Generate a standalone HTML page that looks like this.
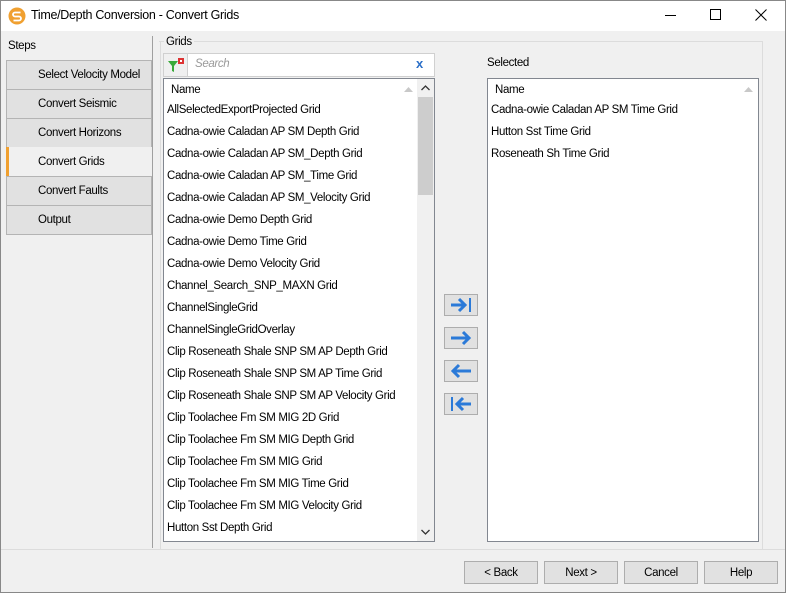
<!DOCTYPE html>
<html><head><style>
*{box-sizing:border-box;margin:0;padding:0}
body{width:786px;height:593px;overflow:hidden;background:#f0f0f0;font-family:"Liberation Sans",sans-serif;font-size:11.5px;color:#000;position:relative;letter-spacing:-0.35px}
.a{position:absolute}
.win{left:0;top:0;width:786px;height:593px;border:1px solid #888}
.title{left:1px;top:1px;width:784px;height:30px;background:#fff}
.step{left:6px;width:146px;height:30px;border:1px solid #b4b4b4;background:#e1e1e1;padding:8px 0 0 31px}
.list{background:#fff;border:1px solid #828790}
.row{position:absolute;left:3px;white-space:nowrap;margin-top:2px}
.btn{height:23px;width:74px;border:1px solid #adadad;background:#e1e1e1;text-align:center;line-height:23px}
.ab{left:444px;width:34px;height:22px;border:1px solid #adadad;background:#e1e1e1}
</style></head><body>
<div class="a win"></div>
<div class="a title"></div>
<svg class="a" style="left:8px;top:7px" width="18" height="18" viewBox="0 0 18 18"><circle cx="9" cy="9" r="8.5" fill="#f0a030"/><path d="M12.5 5.5H7a2 2 0 0 0 0 4h4a2 2 0 0 1 0 4H5.5" stroke="#fff" stroke-width="1.8" fill="none"/></svg>
<div class="a" style="left:31px;top:8px;font-size:12.5px;letter-spacing:-0.3px">Time/Depth Conversion - Convert Grids</div>
<div class="a" style="left:665px;top:15px;width:11px;height:1px;background:#000"></div>
<div class="a" style="left:710px;top:9px;width:11px;height:11px;border:1px solid #000"></div>
<svg class="a" style="left:755px;top:9px" width="12" height="12"><path d="M0.5 0.5L11.5 11.5M11.5 0.5L0.5 11.5" stroke="#000"/></svg>

<div class="a" style="left:8px;top:40px">Steps</div>
<div class="a step" style="top:60px">Select Velocity Model</div>
<div class="a step" style="top:89px">Convert Seismic</div>
<div class="a step" style="top:118px">Convert Horizons</div>
<div class="a step" style="top:147px;background:#f0f0f0;border:none;border-left:3px solid #f0a030;padding-left:29px;padding-top:9px">Convert Grids</div>
<div class="a step" style="top:176px">Convert Faults</div>
<div class="a step" style="top:205px">Output</div>
<div class="a" style="left:152px;top:36px;width:1px;height:512px;background:#a0a0a0"></div>

<div class="a" style="left:159px;top:41px;width:604px;height:508px;border:1px solid #dcdcdc;border-bottom:none;border-left:none"></div>
<div class="a" style="left:160px;top:41px;width:1px;height:508px;background:#dcdcdc"></div>
<div class="a" style="left:164px;top:36px;background:#f0f0f0;padding:0 2px">Grids</div>

<div class="a" style="left:163px;top:53px;width:272px;height:24px;background:#fff;border:1px solid #d0d0d0"></div>
<div class="a" style="left:164px;top:54px;width:24px;height:22px;background:#f0f0f0;border-right:1px solid #d0d0d0"></div>
<svg class="a" style="left:167px;top:57px" width="18" height="17"><path d="M1 4h10L7 9v6l-2-1V9z" fill="#3aaa3a"/><rect x="11" y="1" width="6" height="6" fill="#d33"/><rect x="13" y="3" width="2" height="2" fill="#fff"/></svg>
<div class="a" style="left:195px;top:58px;color:#999;font-style:italic">Search</div>
<div class="a" style="left:416px;top:56px;color:#2b6fc8;font-weight:bold;font-size:13px">x</div>

<div class="a list" style="left:163px;top:78px;width:272px;height:464px;overflow:hidden">
<div class="row" style="left:7px;top:3px">Name</div>
<svg class="a" style="left:240px;top:7px" width="9" height="6"><path d="M0 6L4.5 1L9 6z" fill="#c8c8c8"/></svg>
<div class="a" style="left:253px;top:0;width:17px;height:462px;background:#f0f0f0"></div>
<svg class="a" style="left:257px;top:6px" width="9" height="6"><path d="M0.5 5L4.5 1L8.5 5" stroke="#333" fill="none" stroke-width="1.3"/></svg>
<div class="a" style="left:254px;top:18px;width:15px;height:98px;background:#cdcdcd"></div>
<svg class="a" style="left:257px;top:450px" width="9" height="6"><path d="M0.5 1L4.5 5L8.5 1" stroke="#333" fill="none" stroke-width="1.3"/></svg>
<div class="row" style="top:23px">AllSelectedExportProjected Grid</div>
<div class="row" style="top:45px">Cadna-owie Caladan AP SM Depth Grid</div>
<div class="row" style="top:67px">Cadna-owie Caladan AP SM_Depth Grid</div>
<div class="row" style="top:89px">Cadna-owie Caladan AP SM_Time Grid</div>
<div class="row" style="top:111px">Cadna-owie Caladan AP SM_Velocity Grid</div>
<div class="row" style="top:133px">Cadna-owie Demo Depth Grid</div>
<div class="row" style="top:155px">Cadna-owie Demo Time Grid</div>
<div class="row" style="top:177px">Cadna-owie Demo Velocity Grid</div>
<div class="row" style="top:199px">Channel_Search_SNP_MAXN Grid</div>
<div class="row" style="top:221px">ChannelSingleGrid</div>
<div class="row" style="top:243px">ChannelSingleGridOverlay</div>
<div class="row" style="top:265px">Clip Roseneath Shale SNP SM AP Depth Grid</div>
<div class="row" style="top:287px">Clip Roseneath Shale SNP SM AP Time Grid</div>
<div class="row" style="top:309px">Clip Roseneath Shale SNP SM AP Velocity Grid</div>
<div class="row" style="top:331px">Clip Toolachee Fm SM MIG 2D Grid</div>
<div class="row" style="top:353px">Clip Toolachee Fm SM MIG Depth Grid</div>
<div class="row" style="top:375px">Clip Toolachee Fm SM MIG Grid</div>
<div class="row" style="top:397px">Clip Toolachee Fm SM MIG Time Grid</div>
<div class="row" style="top:419px">Clip Toolachee Fm SM MIG Velocity Grid</div>
<div class="row" style="top:441px">Hutton Sst Depth Grid</div>
</div>

<div class="a ab" style="top:294px"><svg width="32" height="20"><path d="M6 10H20M14 4L20 10L14 16" stroke="#2b7ad8" stroke-width="3" fill="none"/><path d="M25 3V17" stroke="#2b7ad8" stroke-width="2"/></svg></div>
<div class="a ab" style="top:327px"><svg width="32" height="20"><path d="M6 10H24M18 4L24 10L18 16" stroke="#2b7ad8" stroke-width="3" fill="none"/></svg></div>
<div class="a ab" style="top:360px"><svg width="32" height="20"><path d="M26 10H8M14 4L8 10L14 16" stroke="#2b7ad8" stroke-width="3" fill="none"/></svg></div>
<div class="a ab" style="top:393px"><svg width="32" height="20"><path d="M26 10H12M18 4L12 10L18 16" stroke="#2b7ad8" stroke-width="3" fill="none"/><path d="M7 3V17" stroke="#2b7ad8" stroke-width="2"/></svg></div>

<div class="a" style="left:487px;top:57px">Selected</div>
<div class="a list" style="left:487px;top:78px;width:272px;height:464px">
<div class="row" style="left:7px;top:3px">Name</div>
<svg class="a" style="left:256px;top:7px" width="9" height="6"><path d="M0 6L4.5 1L9 6z" fill="#c8c8c8"/></svg>
<div class="row" style="top:23px">Cadna-owie Caladan AP SM Time Grid</div>
<div class="row" style="top:45px">Hutton Sst Time Grid</div>
<div class="row" style="top:67px">Roseneath Sh Time Grid</div>
</div>

<div class="a" style="left:1px;top:549px;width:784px;height:1px;background:#dcdcdc"></div>
<div class="a btn" style="left:464px;top:561px">&lt; Back</div>
<div class="a btn" style="left:544px;top:561px">Next &gt;</div>
<div class="a btn" style="left:624px;top:561px">Cancel</div>
<div class="a btn" style="left:704px;top:561px">Help</div>
</body></html>
